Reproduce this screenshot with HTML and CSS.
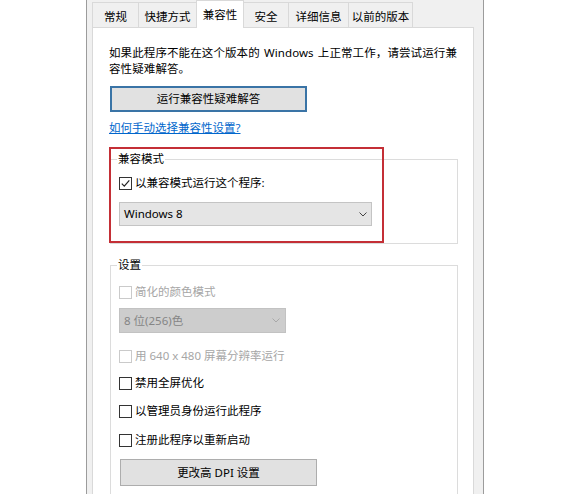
FILE: index.html
```html
<!DOCTYPE html>
<html lang="zh-CN">
<head>
<meta charset="utf-8">
<title>兼容性</title>
<link rel="stylesheet" href="styles.css">
</head>
<body>
<div class="window">
  <div class="tabs">
    <div class="tab w47">常规</div>
    <div class="tab w59">快捷方式</div>
    <div class="tab tab-active w48">兼容性</div>
    <div class="tab w46">安全</div>
    <div class="tab w61">详细信息</div>
    <div class="tab w65">以前的版本</div>
  </div>
  <div class="panel">
    <p class="intro">如果此程序不能在这个版本的 Windows 上正常工作，请尝试运行兼<br>容性疑难解答。</p>
    <button class="btn btn-default btn-wide">运行兼容性疑难解答</button>
    <a class="link" href="#">如何手动选择兼容性设置?</a>

    <div class="compat">
      <fieldset class="group">
        <legend>兼容模式</legend>
        <label class="check">
          <span class="box"><svg class="tick" viewBox="0 0 11 11" width="11" height="11"><polyline points="1.8,5.6 4.3,8.2 9.3,2.4" fill="none" stroke="#222" stroke-width="1.2"/></svg></span>
          <span>以兼容模式运行这个程序:</span>
        </label>
        <div class="select select-main">
          <span>Windows 8</span>
          <svg viewBox="0 0 8 5" width="8" height="5"><polyline points="0.5,0.5 4,4 7.5,0.5" fill="none" stroke="#444" stroke-width="1"/></svg>
        </div>
      </fieldset>
      <div class="annot"></div>
    </div>

    <fieldset class="group group-settings">
      <legend>设置</legend>
      <label class="check disabled">
        <span class="box"></span>
        <span>简化的颜色模式</span>
      </label>
      <div class="select select-disabled">
        <span>8 位(256)色</span>
        <svg viewBox="0 0 8 5" width="8" height="5"><polyline points="0.5,0.5 4,4 7.5,0.5" fill="none" stroke="#a8a8a8" stroke-width="1"/></svg>
      </div>
      <label class="check disabled r3">
        <span class="box"></span>
        <span>用 640 x 480 屏幕分辨率运行</span>
      </label>
      <label class="check r4">
        <span class="box"></span>
        <span>禁用全屏优化</span>
      </label>
      <label class="check r5">
        <span class="box"></span>
        <span>以管理员身份运行此程序</span>
      </label>
      <label class="check r6">
        <span class="box"></span>
        <span>注册此程序以重新启动</span>
      </label>
      <button class="btn btn-dpi">更改高 DPI 设置</button>
    </fieldset>
  </div>
</div>
</body>
</html>
```

FILE: styles.css
```css
html, body {
  margin: 0;
  height: 494px;
  overflow: hidden;
  background: #fff;
}

body {
  font-family: "Noto Sans", "Noto Sans CJK SC", sans-serif;
  font-size: 11.5px;
  color: #000;
}

.window {
  box-sizing: border-box;
  margin-left: 86px;
  width: 398px;
  height: 494px;
  border-left: 1px solid #9c9c9c;
  border-right: 1px solid #9c9c9c;
  background: #f0f0f0;
  padding: 0 9px 0 5px;
}

.tabs {
  display: flex;
  align-items: flex-end;
  height: 27px;
}

.tab {
  box-sizing: border-box;
  height: 25px;
  border: 1px solid #d9d9d9;
  border-bottom: none;
  background: #f0f0f0;
  text-align: center;
  line-height: 16px;
  padding-top: 6px;
  margin-left: -1px;
  white-space: nowrap;
}

.tab:first-child { margin-left: 0; }

.w46 { width: 46px; }
.w47 { width: 47px; }
.w48 { width: 48px; }
.w59 { width: 59px; }
.w61 { width: 61px; }
.w65 { width: 65px; }

.tab-active {
  height: 28px;
  margin-bottom: -1px;
  padding-top: 6px;
  background: #fff;
  position: relative;
  z-index: 1;
}

.panel {
  box-sizing: border-box;
  height: 480px;
  background: #fff;
  border: 1px solid #d9d9d9;
  padding: 17px 0 0 16px;
}

.intro {
  margin: 0;
  line-height: 16px;
  white-space: nowrap;
  letter-spacing: 0.1px;
  word-spacing: 1px;
}

.btn {
  display: flex;
  align-items: center;
  justify-content: center;
  box-sizing: border-box;
  padding: 0;
  background: #e1e1e1;
  border: 1px solid #adadad;
  font: inherit;
  color: #000;
  line-height: 16px;
}

.btn-wide {
  margin: 9px 0 0 1px;
  width: 197px;
  height: 26px;
}

.btn-default {
  border: 2px solid #3a74a6;
}

.link {
  display: block;
  width: max-content;
  margin-top: 8px;
  line-height: 16px;
  color: #0066cc;
  text-decoration: underline;
}

.compat {
  position: relative;
  margin-top: 15px;
  margin-left: 1px;
  width: 348px;
}

.group {
  box-sizing: border-box;
  width: 348px;
  min-width: 0;
  margin: 0;
  border: 1px solid #dcdcdc;
  padding: 8px 8px 17px 8px;
}

.group legend {
  padding: 0 1px;
  margin-left: -2px;
  line-height: 16px;
}

.group-settings {
  margin: 13px 0 0 1px;
  padding-top: 11px;
  padding-bottom: 30px;
}

.annot {
  position: absolute;
  left: -1px;
  top: -4px;
  width: 275px;
  height: 96px;
  box-sizing: border-box;
  border: 2px solid #c42f36;
  pointer-events: none;
}

.check {
  display: flex;
  align-items: center;
  gap: 3px;
  height: 16px;
  line-height: 16px;
  white-space: nowrap;
}

.box {
  box-sizing: border-box;
  width: 13px;
  height: 13px;
  flex: none;
  border: 1px solid #333;
  background: #fff;
  display: flex;
}

.check.disabled { color: #a6a6a6; }
.check.disabled .box { border-color: #cacaca; }

.r3 { margin-top: 15px; }
.r4 { margin-top: 11px; }
.r5 { margin-top: 12px; }
.r6 { margin-top: 13px; }

.select {
  box-sizing: border-box;
  display: flex;
  align-items: center;
  justify-content: space-between;
  line-height: 16px;
  white-space: nowrap;
}

.select-main {
  margin-top: 11px;
  width: 253px;
  height: 24px;
  background: #e5e5e5;
  border: 1px solid #c4c4c4;
  padding: 0 4px 0 4px;
}

.select-disabled {
  margin-top: 8px;
  width: 167px;
  height: 25px;
  background: #cdcdcd;
  border: 1px solid #c2c2c2;
  color: #858585;
  padding: 0 5px 0 4px;
}

.btn-dpi {
  margin: 11px 0 0 1px;
  width: 197px;
  height: 27px;
}
```
